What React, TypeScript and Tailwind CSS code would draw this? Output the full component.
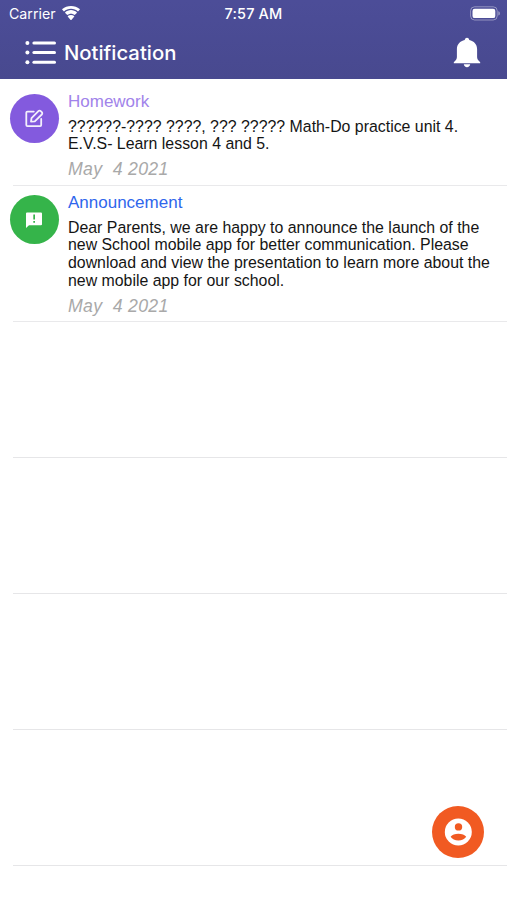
interface Notice {
  id: number;
  kind: "homework" | "announcement";
  title: string;
  message: string;
  date: string;
}

const notices: Notice[] = [
  {
    id: 1,
    kind: "homework",
    title: "Homework",
    message:
      "??????-???? ????, ??? ????? Math-Do practice unit 4.\nE.V.S- Learn lesson 4 and 5.",
    date: "May  4 2021",
  },
  {
    id: 2,
    kind: "announcement",
    title: "Announcement",
    message:
      "Dear Parents, we are happy to announce the launch of the\nnew School mobile app for better communication. Please\ndownload and view the presentation to learn more about the\nnew mobile app for our school.",
    date: "May  4 2021",
  },
];

const emptyRows = [1, 2, 3, 4];

function WifiIcon() {
  return (
    <svg className="ml-[5px] h-[15px] w-[20px]" viewBox="0 0 18 13.5" fill="#fff">
      <path d="M9 2.500c2.400 0 4.600.9 6.300 2.500l1.500-1.600c.3-.2.3-.5 0-.7C14.700 1 12 0 9 0S3.300 1 1.200 2.700c-.3.2-.3.5 0 .7L2.700 5C4.400 3.400 6.600 2.500 9 2.500z" />
      <path d="M9 6.900c1.200 0 2.400.5 3.300 1.200l1.900-1.800c.2-.2.2-.5 0-.7C12.900 4.300 11 3.500 9 3.500s-3.900.8-5.200 2.100c-.2.2-.2.5 0 .7l1.900 1.800C6.600 7.400 7.800 6.900 9 6.900z" />
      <path d="M11.800 9.700c.2-.2.2-.4 0-.6C11 8.400 10.100 8 9 8s-2 .4-2.800 1.100c-.2.2-.2.4 0 .6l2.500 2.800c.2.2.4.2.6 0z" />
    </svg>
  );
}

function BatteryIcon() {
  return (
    <svg className="h-[15px] w-[31px]" viewBox="0 0 31 15">
      <rect x="1.600" y="0.800" width="26.600" height="13.200" rx="4" fill="none" stroke="#fff" strokeOpacity="0.400" />
      <rect x="3.500" y="2.700" width="22.800" height="9.400" rx="2.200" fill="#fff" />
      <path d="M29.300 5.200c1.100.4 1.600 1.200 1.600 2.200s-.5 1.800-1.600 2.200z" fill="#fff" fillOpacity="0.450" />
    </svg>
  );
}

function MenuIcon() {
  return (
    <svg className="h-6 w-8" viewBox="0 0 32 24" fill="#fff">
      {[2.100, 11.600, 21.200].map((y) => (
        <g key={y}>
          <circle cx="2.400" cy={y} r="2" />
          <rect x="7.400" y={y - 1.500} width="23.600" height="3" rx="1.500" />
        </g>
      ))}
    </svg>
  );
}

function BellIcon() {
  return (
    <svg className="mb-px h-[31px] w-[28px]" viewBox="0 0 28 32" preserveAspectRatio="none" fill="#fff">
      <path d="M14 .8c-1.300 0-2.200 1-2.200 2.300C7 4.200 3.900 7.700 3.900 12.500v8c0 2-.5 3-1.700 4.100L.8 26v1.100h26.400V26l-1.400-1.400c-1.200-1.100-1.700-2.100-1.700-4.100v-8c0-4.800-3.100-8.300-7.900-9.400C16.200 1.800 15.300.8 14 .8z" />
      <path d="M10.800 28.200h6.400c-.2 1.800-1.500 3-3.200 3s-3-1.200-3.200-3z" />
    </svg>
  );
}

function HomeworkIcon() {
  return (
    <svg
      className="h-5 w-5"
      viewBox="0 0 20 20"
      fill="none"
      stroke="#fff"
      strokeOpacity="0.900"
      strokeWidth="1.800"
      strokeLinecap="round"
      strokeLinejoin="round"
    >
      <path d="M8.800 2.600H2.400a1.100 1.100 0 0 0-1.100 1.100v12.400a1.100 1.100 0 0 0 1.100 1.100h12.700a1.100 1.100 0 0 0 1.100-1.100V10" />
      <path d="M6 12.700l.5-3.600 6.900-7a1.600 1.600 0 0 1 2.300 0l1.100 1.100a1.600 1.600 0 0 1 0 2.300l-7 6.900z" />
    </svg>
  );
}

function AnnouncementIcon() {
  return (
    <svg className="mr-px h-4 w-4" viewBox="0 0 16 16">
      <path d="M1 .5h14A1 1 0 0 1 16 1.500v10.700a1 1 0 0 1-1 1H3L0 16V1.500A1 1 0 0 1 1 .5z" fill="#fff" />
      <path d="M7.300 2.600h1.700v4.800H7.300zM7.300 9h1.700v1.700H7.300z" fill="#35b44a" />
    </svg>
  );
}

function ProfileIcon() {
  return (
    <svg className="h-7 w-7" viewBox="0 0 28 28">
      <circle cx="14.300" cy="14" r="13.500" fill="#fff" />
      <circle cx="14.500" cy="8.900" r="3.700" fill="#f15a22" />
      <path d="M6.600 18.800c1.400-2 4.400-3 7.800-3s6.400 1 7.800 3c-1.500 2.400-4.400 3.800-7.800 3.800s-6.300-1.400-7.800-3.800z" fill="#f15a22" />
    </svg>
  );
}

function NoticeRow({ notice }: { notice: Notice }) {
  const isHomework = notice.kind === "homework";
  return (
    <li className={`flex flex-col ${isHomework ? "h-[107px]" : "h-[136px]"}`}>
      <div className="flex flex-1 pl-[10px]">
        <div
          className={`flex h-[49px] w-[49px] shrink-0 items-center justify-center rounded-full ${
            isHomework ? "mt-[15px] bg-[#835ade]" : "mt-[9px] bg-[#35b44a]"
          }`}
        >
          {isHomework ? <HomeworkIcon /> : <AnnouncementIcon />}
        </div>
        <div className={`ml-[9px] ${isHomework ? "pt-[13px]" : "pt-[7px]"}`}>
          <h2
            className={`text-[17px] leading-5 ${
              isHomework ? "text-[#a183ea]" : "text-[#2f66ec]"
            }`}
          >
            {notice.title}
          </h2>
          <p className="mt-[5.500px] text-[15.880px] leading-[17.700px] whitespace-pre text-[#151515]">
            {notice.message}
          </p>
          <p className="mt-[6.500px] text-[17.700px] leading-5 tracking-[0.300px] whitespace-pre text-[#a9a9a9] italic">
            {notice.date}
          </p>
        </div>
      </div>
      <div className="ml-[13px] h-[1.500px] bg-[#e9e9eb]" />
    </li>
  );
}

export default function App() {
  return (
    <div className="relative h-[900px] w-[507px] overflow-hidden bg-white font-['Liberation_Sans',Arial,sans-serif]">
      <header className="h-[79px] bg-linear-to-b from-[#4c4d98] to-[#48498f] font-[Inter,sans-serif] text-white">
        <div className="grid h-[27px] grid-cols-3 items-center pr-[7px] pl-[9px] text-[14.200px]">
          <div className="flex items-center">
            <span>Carrier</span>
            <WifiIcon />
          </div>
          <span className="pt-px pr-[2px] text-center text-[14.500px] font-medium tracking-[0.150px]">
            7:57 AM
          </span>
          <div className="flex justify-end">
            <BatteryIcon />
          </div>
        </div>
        <div className="flex h-[52px] items-center pr-[26px] pl-[25px]">
          <MenuIcon />
          <h1 className="ml-[7px] flex-1 text-[20.300px] font-medium">
            Notification
          </h1>
          <BellIcon />
        </div>
      </header>

      <ul>
        {notices.map((notice) => (
          <NoticeRow key={notice.id} notice={notice} />
        ))}
        {emptyRows.map((row) => (
          <li key={row} className="flex h-[136px] items-end pl-[13px]">
            <div className="h-px flex-1 bg-[#e6e6e8]" />
          </li>
        ))}
      </ul>

      <button
        aria-label="Profile"
        className="absolute top-[806px] left-[432px] flex h-[52px] w-[52px] items-center justify-center rounded-full bg-[#f15a22]"
      >
        <ProfileIcon />
      </button>
    </div>
  );
}
